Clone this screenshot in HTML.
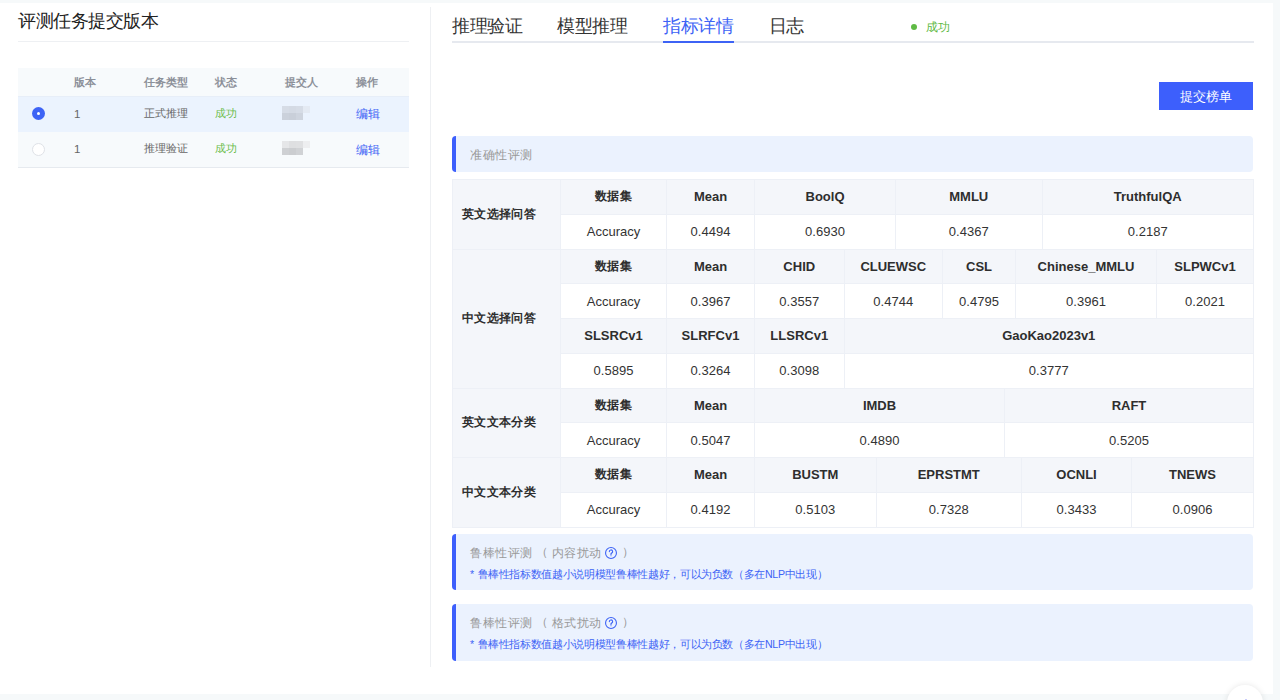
<!DOCTYPE html>
<html><head><meta charset="utf-8">
<style>
*{box-sizing:border-box;margin:0;padding:0}
html,body{width:1280px;height:700px;overflow:hidden}
body{background:#f6f9fa;font-family:"Liberation Sans",sans-serif;position:relative;color:#333}
.card{position:absolute;left:0;top:3px;width:1273px;height:691px;background:#fff}
.abs{position:absolute}
.title{left:18px;top:9px;font-size:17.6px;letter-spacing:-0.42px;line-height:24px;color:#222;white-space:nowrap}
.tline{left:18px;top:41px;width:391px;height:1px;background:#eef0f3}
.vsep{left:430px;top:7px;width:1px;height:660px;background:#eef0f3}
.lt{position:absolute;left:18px;top:68px;width:391px;height:100px;background:#f7fafc;border-bottom:1px solid #e6eaef}
.lrow{position:absolute;left:0;width:391px}
.sel{background:#ebf3fe;border-top:1px solid #e7eef8}
.lt .h{position:absolute;font-size:10.8px;font-weight:700;color:#8c9099;white-space:nowrap}
.lt .t{position:absolute;font-size:10.8px;color:#666;white-space:nowrap}
.lt .n{position:absolute;font-size:11.5px;font-weight:400;color:#666;white-space:nowrap}
.lt .g{position:absolute;font-size:10.8px;color:#6bbd4c;white-space:nowrap}
.lt .e{position:absolute;font-size:12.3px;letter-spacing:0.2px;color:#3d63f5;white-space:nowrap}
.radio{position:absolute;width:13px;height:13px;border-radius:50%}
i{position:absolute;width:7px;height:7px}
.mos{position:absolute;left:0;top:0;filter:blur(0.6px)}
.tab{position:absolute;top:14px;font-size:18px;letter-spacing:-0.3px;line-height:24px;color:#333;white-space:nowrap}
.tabs-line{left:452px;top:41px;width:802px;height:2px;background:#e6e9ef}
.ink{left:663px;top:41px;width:71px;height:2px;background:#3d63f5}
.btn{left:1159px;top:82px;width:94px;height:28px;background:#3d5ffc;color:#fff;font-size:12.5px;letter-spacing:0.25px;line-height:28px;text-align:center;padding-top:1px}
.sec{position:absolute;left:452px;width:801px;background:#ebf2fe;border-radius:4px;overflow:hidden}
.sec::before{content:"";position:absolute;left:0;top:0;bottom:0;width:4px;background:#3d5ffc}
.s1{position:absolute;font-size:12.45px;letter-spacing:0.55px;color:#999;white-space:nowrap;line-height:16px}
.s2{position:absolute;font-size:10.64px;color:#3d63f5;white-space:nowrap;line-height:14px}
.s2b{letter-spacing:-0.35px}
.c{position:absolute;display:flex;align-items:center;justify-content:center;font-size:13px;white-space:nowrap;border-left:1px solid #edf0f6;border-top:1px solid #edf0f6}
.cj{font-size:12.3px;letter-spacing:0.35px}
.cat{background:#f4f6fa;justify-content:flex-start;padding-left:9px;font-weight:700;color:#2e2e2e}
.hd{background:#f4f6fa;font-weight:700;color:#2e2e2e}
.val{background:#fff;color:#333}
.tb{position:absolute;left:452px;top:179px;width:802px;height:348.5px;border-right:1px solid #edf0f6;border-bottom:1px solid #edf0f6}
</style></head><body>
<div class="card"></div>
<div class="abs title">评测任务提交版本</div>
<div class="abs tline"></div>
<div class="abs vsep"></div>
<div class="lt">
  <div class="h" style="left:55.5px;top:7.5px">版本</div>
  <div class="h" style="left:126px;top:7.5px">任务类型</div>
  <div class="h" style="left:196.5px;top:7.5px">状态</div>
  <div class="h" style="left:267px;top:7.5px">提交人</div>
  <div class="h" style="left:338px;top:7.5px">操作</div>
  <div class="lrow sel" style="top:27.5px;height:36.5px">
    <div class="radio" style="left:14px;top:10.5px;background:#3d63f5"><div style="position:absolute;left:4.6px;top:4.6px;width:3.8px;height:3.8px;border-radius:50%;background:#fff"></div></div>
    <div class="n" style="left:56px;top:11.5px">1</div>
    <div class="t" style="left:126px;top:10.5px">正式推理</div>
    <div class="g" style="left:196.5px;top:10.5px">成功</div>
    <div class="e" style="left:338px;top:9.5px">编辑</div>
  </div>
  <div class="lrow" style="top:64px;height:35px">
    <div class="radio" style="left:14px;top:11px;background:#fff;border:1px solid #dfe2e7"></div>
    <div class="n" style="left:56px;top:11px">1</div>
    <div class="t" style="left:126px;top:10px">推理验证</div>
    <div class="g" style="left:196.5px;top:10px">成功</div>
    <div class="e" style="left:338px;top:10px">编辑</div>
  </div>
</div>
<div class="mos"><i style="left:282px;top:105.5px;background:#d6dce6"></i><i style="left:289px;top:105.5px;background:#d4dae4"></i><i style="left:296px;top:105.5px;background:#d6dce6"></i><i style="left:303px;top:105.5px;background:#e4eaf3"></i><i style="left:282px;top:112.5px;background:#cbd1db"></i><i style="left:289px;top:112.5px;background:#c9cfd9"></i><i style="left:296px;top:112.5px;background:#ced4de"></i><i style="left:282px;top:141px;background:#e5e6e8"></i><i style="left:289px;top:141px;background:#dedfe1"></i><i style="left:296px;top:141px;background:#dfe0e2"></i><i style="left:303px;top:141px;background:#edeef0"></i><i style="left:282px;top:148px;background:#ced0d3"></i><i style="left:289px;top:148px;background:#cbcdd0"></i><i style="left:296px;top:148px;background:#d0d2d5"></i></div>
<div class="tab" style="left:452px">推理验证</div>
<div class="tab" style="left:557px">模型推理</div>
<div class="tab" style="left:663px;color:#3d63f5">指标详情</div>
<div class="tab" style="left:768.8px">日志</div>
<div class="abs tabs-line"></div>
<div class="abs ink"></div>
<div class="abs" style="left:911.2px;top:23.5px;width:6px;height:6px;border-radius:50%;background:#5fba45"></div>
<div class="abs" style="left:925.5px;top:18.5px;font-size:12px;letter-spacing:0.5px;color:#5fba45;white-space:nowrap">成功</div>
<div class="abs btn">提交榜单</div>
<div class="sec" style="top:136px;height:36px"><span class="s1" style="left:18px;top:11px">准确性评测</span></div>
<div class="c cat cj" style="left:452px;top:179.0px;width:108px;height:69.5px">英文选择问答</div>
<div class="c cat cj" style="left:452px;top:248.5px;width:108px;height:139.0px">中文选择问答</div>
<div class="c cat cj" style="left:452px;top:387.5px;width:108px;height:69.5px">英文文本分类</div>
<div class="c cat cj" style="left:452px;top:457.0px;width:108px;height:69.5px">中文文本分类</div>
<div class="c hd cj" style="left:560px;top:179.0px;width:106px;height:34.75px">数据集</div>
<div class="c val" style="left:560px;top:213.75px;width:106px;height:34.75px">Accuracy</div>
<div class="c hd" style="left:666px;top:179.0px;width:88px;height:34.75px">Mean</div>
<div class="c val" style="left:666px;top:213.75px;width:88px;height:34.75px">0.4494</div>
<div class="c hd" style="left:754px;top:179.0px;width:141px;height:34.75px">BoolQ</div>
<div class="c val" style="left:754px;top:213.75px;width:141px;height:34.75px">0.6930</div>
<div class="c hd" style="left:895px;top:179.0px;width:146.5px;height:34.75px">MMLU</div>
<div class="c val" style="left:895px;top:213.75px;width:146.5px;height:34.75px">0.4367</div>
<div class="c hd" style="left:1041.5px;top:179.0px;width:211.5px;height:34.75px">TruthfulQA</div>
<div class="c val" style="left:1041.5px;top:213.75px;width:211.5px;height:34.75px">0.2187</div>
<div class="c hd cj" style="left:560px;top:248.5px;width:106px;height:34.75px">数据集</div>
<div class="c val" style="left:560px;top:283.25px;width:106px;height:34.75px">Accuracy</div>
<div class="c hd" style="left:666px;top:248.5px;width:88px;height:34.75px">Mean</div>
<div class="c val" style="left:666px;top:283.25px;width:88px;height:34.75px">0.3967</div>
<div class="c hd" style="left:754px;top:248.5px;width:89.5px;height:34.75px">CHID</div>
<div class="c val" style="left:754px;top:283.25px;width:89.5px;height:34.75px">0.3557</div>
<div class="c hd" style="left:843.5px;top:248.5px;width:98.5px;height:34.75px">CLUEWSC</div>
<div class="c val" style="left:843.5px;top:283.25px;width:98.5px;height:34.75px">0.4744</div>
<div class="c hd" style="left:942px;top:248.5px;width:73px;height:34.75px">CSL</div>
<div class="c val" style="left:942px;top:283.25px;width:73px;height:34.75px">0.4795</div>
<div class="c hd" style="left:1015px;top:248.5px;width:141px;height:34.75px">Chinese_MMLU</div>
<div class="c val" style="left:1015px;top:283.25px;width:141px;height:34.75px">0.3961</div>
<div class="c hd" style="left:1156px;top:248.5px;width:97px;height:34.75px">SLPWCv1</div>
<div class="c val" style="left:1156px;top:283.25px;width:97px;height:34.75px">0.2021</div>
<div class="c hd" style="left:560px;top:318.0px;width:106px;height:34.75px">SLSRCv1</div>
<div class="c val" style="left:560px;top:352.75px;width:106px;height:34.75px">0.5895</div>
<div class="c hd" style="left:666px;top:318.0px;width:88px;height:34.75px">SLRFCv1</div>
<div class="c val" style="left:666px;top:352.75px;width:88px;height:34.75px">0.3264</div>
<div class="c hd" style="left:754px;top:318.0px;width:89.5px;height:34.75px">LLSRCv1</div>
<div class="c val" style="left:754px;top:352.75px;width:89.5px;height:34.75px">0.3098</div>
<div class="c hd" style="left:843.5px;top:318.0px;width:409.5px;height:34.75px">GaoKao2023v1</div>
<div class="c val" style="left:843.5px;top:352.75px;width:409.5px;height:34.75px">0.3777</div>
<div class="c hd cj" style="left:560px;top:387.5px;width:106px;height:34.75px">数据集</div>
<div class="c val" style="left:560px;top:422.25px;width:106px;height:34.75px">Accuracy</div>
<div class="c hd" style="left:666px;top:387.5px;width:88px;height:34.75px">Mean</div>
<div class="c val" style="left:666px;top:422.25px;width:88px;height:34.75px">0.5047</div>
<div class="c hd" style="left:754px;top:387.5px;width:250px;height:34.75px">IMDB</div>
<div class="c val" style="left:754px;top:422.25px;width:250px;height:34.75px">0.4890</div>
<div class="c hd" style="left:1004px;top:387.5px;width:249px;height:34.75px">RAFT</div>
<div class="c val" style="left:1004px;top:422.25px;width:249px;height:34.75px">0.5205</div>
<div class="c hd cj" style="left:560px;top:457.0px;width:106px;height:34.75px">数据集</div>
<div class="c val" style="left:560px;top:491.75px;width:106px;height:34.75px">Accuracy</div>
<div class="c hd" style="left:666px;top:457.0px;width:88px;height:34.75px">Mean</div>
<div class="c val" style="left:666px;top:491.75px;width:88px;height:34.75px">0.4192</div>
<div class="c hd" style="left:754px;top:457.0px;width:121.5px;height:34.75px">BUSTM</div>
<div class="c val" style="left:754px;top:491.75px;width:121.5px;height:34.75px">0.5103</div>
<div class="c hd" style="left:875.5px;top:457.0px;width:145.5px;height:34.75px">EPRSTMT</div>
<div class="c val" style="left:875.5px;top:491.75px;width:145.5px;height:34.75px">0.7328</div>
<div class="c hd" style="left:1021px;top:457.0px;width:110px;height:34.75px">OCNLI</div>
<div class="c val" style="left:1021px;top:491.75px;width:110px;height:34.75px">0.3433</div>
<div class="c hd" style="left:1131px;top:457.0px;width:122px;height:34.75px">TNEWS</div>
<div class="c val" style="left:1131px;top:491.75px;width:122px;height:34.75px">0.0906</div>
<div class="tb"></div>
<div class="sec" style="top:533.8px;height:56.5px">
<span class="s1" style="left:18px;top:11px">鲁棒性评测</span>
<span class="s1" style="left:84px;top:10px">（</span>
<span class="s1" style="left:99.5px;top:11px">内容扰动</span>
<span class="abs" style="left:153px;top:13.2px;width:12px;height:12px;line-height:0"><svg width="12" height="12" viewBox="0 0 12 12"><circle cx="6" cy="6" r="5.45" fill="none" stroke="#3d63f5" stroke-width="1.1"/><path d="M4.35 4.6a1.65 1.65 0 1 1 2.3 1.5c-.45.2-.65.45-.65.9v.45" fill="none" stroke="#3d63f5" stroke-width="1.15" stroke-linecap="round"/><circle cx="6" cy="8.75" r=".6" fill="#3d63f5"/></svg></span>
<span class="s1" style="left:170px;top:10px">）</span>
<span class="s2" style="left:18px;top:33px">*</span><span class="s2 s2b" style="left:25.5px;top:33px">鲁棒性指标数值越小说明模型鲁棒性越好，可以为负数（多在NLP中出现）</span>
</div>
<div class="sec" style="top:604px;height:56.5px">
<span class="s1" style="left:18px;top:11px">鲁棒性评测</span>
<span class="s1" style="left:84px;top:10px">（</span>
<span class="s1" style="left:99.5px;top:11px">格式扰动</span>
<span class="abs" style="left:153px;top:13.2px;width:12px;height:12px;line-height:0"><svg width="12" height="12" viewBox="0 0 12 12"><circle cx="6" cy="6" r="5.45" fill="none" stroke="#3d63f5" stroke-width="1.1"/><path d="M4.35 4.6a1.65 1.65 0 1 1 2.3 1.5c-.45.2-.65.45-.65.9v.45" fill="none" stroke="#3d63f5" stroke-width="1.15" stroke-linecap="round"/><circle cx="6" cy="8.75" r=".6" fill="#3d63f5"/></svg></span>
<span class="s1" style="left:170px;top:10px">）</span>
<span class="s2" style="left:18px;top:33px">*</span><span class="s2 s2b" style="left:25.5px;top:33px">鲁棒性指标数值越小说明模型鲁棒性越好，可以为负数（多在NLP中出现）</span>
</div>
<div class="abs" style="left:1227px;top:685px;width:36px;height:36px;border-radius:50%;background:#fff;box-shadow:0 0 6px rgba(0,0,0,0.1)"></div>
<div class="abs" style="left:1244.5px;top:698.5px;width:2px;height:2px;background:#c9ccfb"></div>
</body></html>
